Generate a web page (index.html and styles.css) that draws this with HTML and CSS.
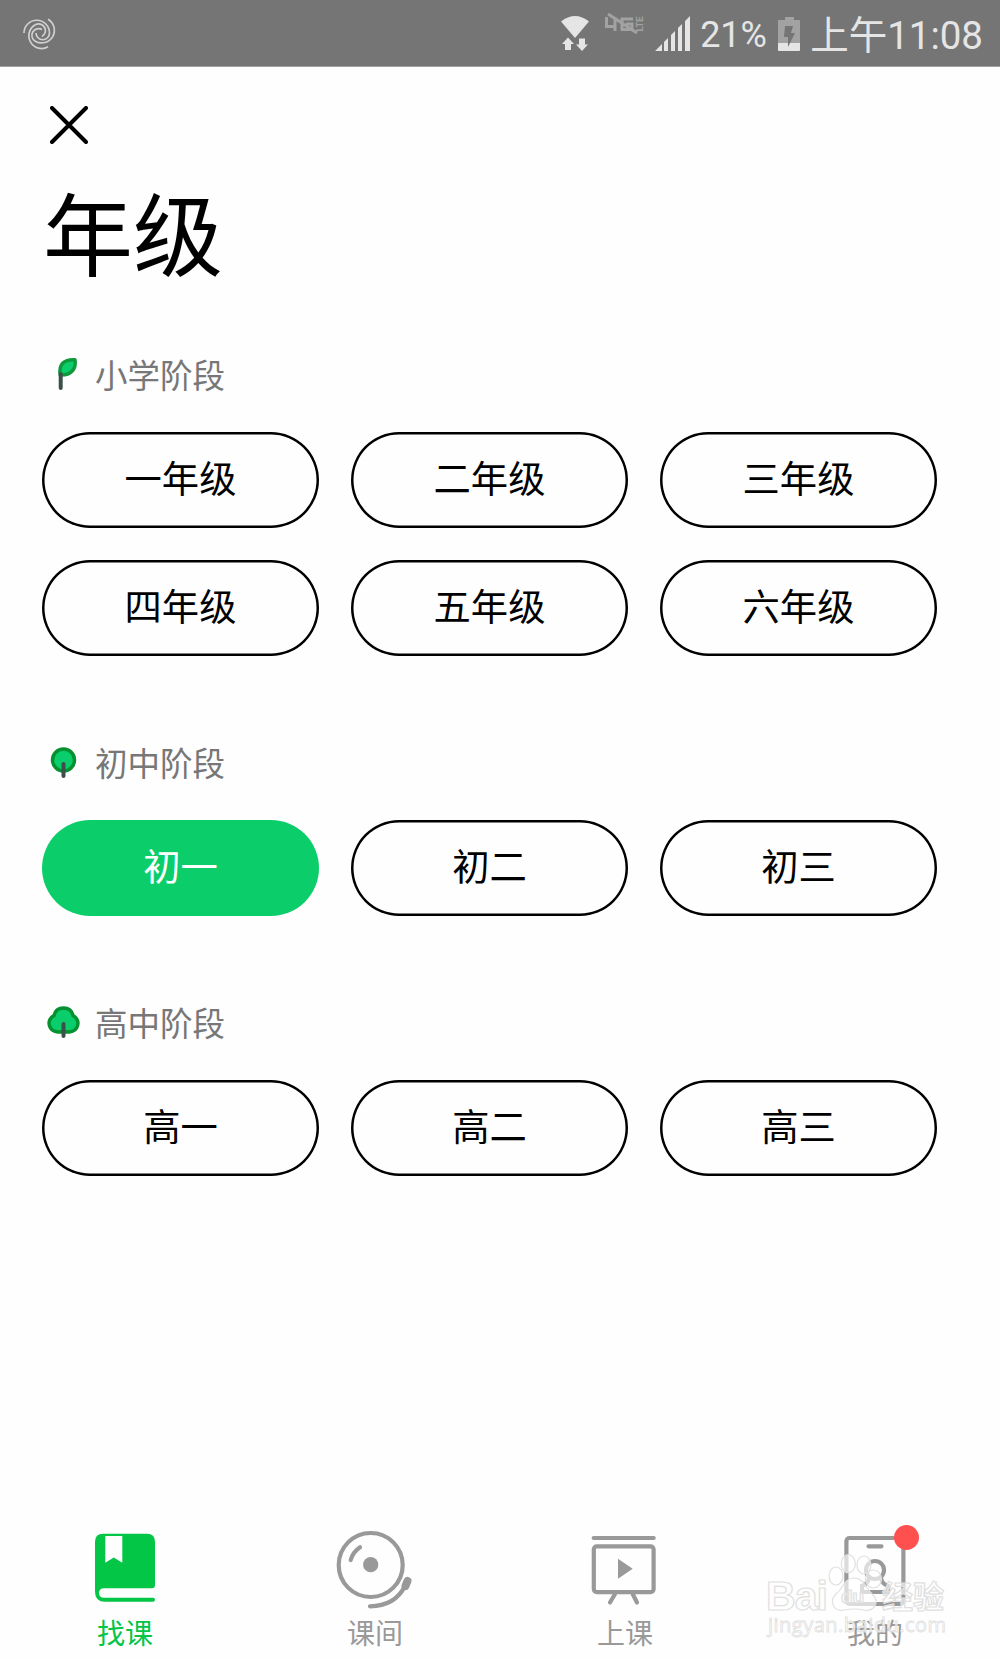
FILE: index.html
```
<!DOCTYPE html>
<html lang="zh-CN">
<head>
    <meta charset="UTF-8">
    <meta name="viewport" content="width=device-width, initial-scale=1.0">
    <title>年级</title>
    <link rel="stylesheet" href="styles.css">
</head>
<body>
    <header class="status-bar">
        <svg class="swirl" width="34" height="34" viewBox="0 0 34 34">
            <path d="M1 17A12.750 12.750 0 0 1 26.500 17A6.750 6.750 0 0 1 13 17"/>
            <path transform="rotate(120 17 17)" d="M1 17A12.750 12.750 0 0 1 26.500 17A6.750 6.750 0 0 1 13 17"/>
            <path transform="rotate(240 17 17)" d="M1 17A12.750 12.750 0 0 1 26.500 17A6.750 6.750 0 0 1 13 17"/>
        </svg>
        <div class="status-right">
            <svg class="wifi" width="30" height="38" viewBox="0 0 30 38">
                <path d="M1 6.500Q15-4.500 29 6.500L15 23Z"/>
                <path d="M8 22.500L14 29H11V35H5V29H2ZM22 36L28 29.500H25V23.500H19V29.500H16Z"/>
            </svg>
            <svg class="lte" width="40" height="22" viewBox="0 0 40 22">
                <path class="lte-line" d="M2.500 4V13.500H12M11 4V18M29 6H18V16.500H28V11H22M4 1L33 20"/>
                <text x="-18.500" y="38.500" textLength="15" transform="rotate(-90)">LTE</text>
            </svg>
            <svg class="signal" width="36" height="36" viewBox="0 0 36 36">
                <path d="M0 35L7 28V35ZM9 35V26L13 22V35ZM16 35V19L20 15V35ZM23 35V12L27 8V35ZM30 35V5L35 0V35Z"/>
            </svg>
            <span class="percent">21%</span>
            <svg class="battery" width="22" height="36" viewBox="0 0 22 36">
                <path fill="#a2a2a2" d="M7 1H16V4H22V34Q22 35 21 35H1Q0 35 0 34V4H7Z"/>
                <path fill="#e5e5e5" d="M0 27H22V34Q22 35 21 35H1Q0 35 0 34Z"/>
                <path fill="#757575" d="M7 10H15L13 17H17L10 31V21H6Z"/>
            </svg>
            <span class="clock">上午11:08</span>
        </div>
    </header>

    <main class="content">
        <svg class="close" width="38" height="38" viewBox="0 0 38 38">
            <path d="M2 2L36 36M36 2L2 36"/>
        </svg>
        <h1>年级</h1>

        <section class="stage">
            <h2>
                <svg class="stage-icon" width="34" height="34" viewBox="0 0 34 34">
                    <path d="M10.200 17C8.500 6 14 1.200 25 1.800C26.500 11 21 17.500 10.200 17Z" fill="#09ce6b" stroke="#0f983c" stroke-width="3.500" stroke-linejoin="round"/>
                    <path class="trunk" d="M10.700 16V30"/>
                </svg>
                小学阶段
            </h2>
            <div class="grades">
                <button>一年级</button>
                <button>二年级</button>
                <button>三年级</button>
                <button>四年级</button>
                <button>五年级</button>
                <button>六年级</button>
            </div>
        </section>

        <section class="stage">
            <h2>
                <svg class="stage-icon" width="34" height="34" viewBox="0 0 34 34">
                    <circle cx="13.500" cy="14" r="11" fill="#09ce6b" stroke="#05912f" stroke-width="3.500"/>
                    <path class="trunk" d="M13.500 18V30"/>
                </svg>
                初中阶段
            </h2>
            <div class="grades">
                <button class="selected">初一</button>
                <button>初二</button>
                <button>初三</button>
            </div>
        </section>

        <section class="stage">
            <h2>
                <svg class="stage-icon" width="34" height="34" viewBox="0 0 34 34">
                    <path d="M13.500 2C18.500 2 22 5 23 9.500C27.500 12 29.500 17 26.500 22C24 26.500 17 26.500 13.500 25.500C10 26.500 3 26.500 .5 22C-2.500 17-.5 12 4 9.500C5 5 8.500 2 13.500 2Z" fill="#09ce6b" stroke="#05912f" stroke-width="3.500"/>
                    <path class="trunk" d="M13.500 18V30"/>
                </svg>
                高中阶段
            </h2>
            <div class="grades">
                <button>高一</button>
                <button>高二</button>
                <button>高三</button>
            </div>
        </section>
    </main>

    <nav class="tabs">
        <a class="tab active">
            <svg width="84" height="84" viewBox="0 0 84 84">
                <path class="solid" fill-rule="evenodd" d="M20 7.700H64Q72 7.700 72 15.700V59Q72 62.300 69 62.300H21Q16 62.300 16 67Q16 71.700 21 71.700H70Q72 71.700 72 73.700Q72 75.700 70 75.700H22Q12 75.700 12 65.700V15.700Q12 7.700 20 7.700ZM22.300 10V36.700L30.800 31.500L39.300 36.700V10Z"/>
            </svg>
            <span>找课</span>
        </a>
        <a class="tab">
            <svg width="84" height="84" viewBox="0 0 84 84">
                <circle cx="37.700" cy="39" r="32"/>
                <circle class="solid" cx="37.700" cy="38.700" r="7.600"/>
                <path d="M17.700 34Q20 26 27 21.300M37 80.300Q62 80 72 60"/>
                <path class="hammer" d="M74.500 55L72.500 60"/>
            </svg>
            <span>课间</span>
        </a>
        <a class="tab">
            <svg width="84" height="84" viewBox="0 0 84 84">
                <path d="M10.700 12H70.700M32 68L27 76.500M49.700 68L54 76.500"/>
                <rect x="10.800" y="20.300" width="59.800" height="45.800" rx="3"/>
                <path class="solid" d="M35 32.700V52.700L49.700 42.700Z"/>
            </svg>
            <span>上课</span>
        </a>
        <a class="tab">
            <svg width="84" height="84" viewBox="0 0 84 84">
                <rect x="13.400" y="12" width="57" height="66" rx="3"/>
                <path d="M35.500 20.300H48.500M36 52Q35 58 29 60V66H55V60Q49 58 48 52"/>
                <circle cx="42" cy="44" r="9"/>
            </svg>
            <i class="badge"></i>
            <span>我的</span>
        </a>
    </nav>

    <svg class="watermark" width="200" height="100" viewBox="0 0 200 100">
        <text class="mark" x="2" y="60" font-size="41" textLength="62">Bai</text>
        <g class="paw">
            <ellipse cx="72" cy="26" rx="7" ry="9"/>
            <ellipse cx="84.300" cy="13.700" rx="7" ry="9"/>
            <ellipse cx="100" cy="15" rx="7" ry="9"/>
            <ellipse cx="109.500" cy="29" rx="8" ry="9"/>
            <path d="M90 28C100 28 102 38 109 45C116 52 110 62 100 60Q90 58 80 60C69 62 65 51 72 44C80 38 80 28 90 28Z"/>
        </g>
        <text class="mark" x="77" y="53" font-size="19">du</text>
        <text class="mark cn" x="118" y="58" font-size="31">经验</text>
        <text class="mark url" x="4" y="82" font-size="20" textLength="178">jingyan.baidu.com</text>
    </svg>
</body>
</html>
```

FILE: styles.css
```
* {
    box-sizing: border-box;
}
body {
    margin: 0;
    height: 1661px;
    display: flex;
    flex-direction: column;
    position: relative;
    background: #fefefe;
    color: #000;
    font-family: Roboto, "Noto Sans CJK SC", sans-serif;
}
.status-bar {
    height: 67px;
    display: flex;
    justify-content: space-between;
    padding: 0 17px 0 23px;
    background: #757575;
    border-bottom: 1px solid #a0a0a0;
    color: #e5e5e5;
}
.swirl {
    margin-top: 16px;
    fill: none;
    stroke: #d0d0d0;
    stroke-width: 1.7;
}
.status-right {
    display: flex;
    align-items: flex-start;
}
.wifi {
    margin: 15px 14px 0 0;
    fill: #e5e5e5;
}
.lte {
    margin: 13px 11px 0 0;
    fill: #a2a2a2;
    font: bold 9.5px Roboto, sans-serif;
}
.lte-line {
    fill: none;
    stroke: #a2a2a2;
    stroke-width: 3;
}
.signal {
    margin: 16px 9px 0 0;
    fill: #e5e5e5;
}
.percent {
    width: 78px;
    font-size: 36px;
    line-height: 71px;
}
.battery {
    margin: 16px 10px 0 0;
}
.clock {
    font-size: 38.5px;
    line-height: 72px;
    white-space: nowrap;
}
.content {
    flex: 1;
    padding: 39px 42px 0;
}
.close {
    display: block;
    margin-left: 8px;
    fill: none;
    stroke: #000;
    stroke-width: 4;
    stroke-linecap: round;
}
h1 {
    margin: 45px 0 67px 1px;
    font-size: 90px;
    line-height: 100px;
    font-weight: 400;
}
.stage {
    margin-bottom: 88px;
}
.stage h2 {
    display: flex;
    align-items: center;
    gap: 11px;
    margin: 0 0 36px 8px;
    padding-top: 2px;
    height: 40px;
    font-size: 32.5px;
    line-height: 38px;
    font-weight: 400;
    color: #777;
}
.stage-icon {
    margin-bottom: 4px;
    overflow: visible;
}
.trunk {
    fill: none;
    stroke: #3c4f4a;
    stroke-width: 4;
    stroke-linecap: round;
}
.grades {
    display: grid;
    grid-template-columns: repeat(3, 277px);
    gap: 32px;
}
.grades button {
    height: 96px;
    padding: 0 0 6px;
    border: 0;
    border-radius: 48px;
    box-shadow: inset 0 0 0 2.5px #000;
    background: none;
    color: #000;
    font: 37.3px Roboto, "Noto Sans CJK SC", sans-serif;
}
.grades .selected {
    background: #0bce6b;
    box-shadow: none;
    color: #fff;
}
.tabs {
    height: 135px;
    display: flex;
}
.tab {
    flex: 1;
    display: flex;
    flex-direction: column;
    align-items: center;
    gap: 5px;
    position: relative;
    color: #999;
    font-size: 28px;
    line-height: 40px;
}
.tab svg {
    fill: none;
    stroke: currentColor;
    stroke-width: 4.2;
    stroke-linecap: round;
}
.tab .solid {
    fill: currentColor;
    stroke: none;
}
.tab .hammer {
    stroke-width: 8;
}
.tab.active {
    color: #03c546;
}
.badge {
    position: absolute;
    top: -1px;
    left: 144px;
    width: 25px;
    height: 25px;
    border-radius: 50%;
    background: #ff5050;
}
.watermark {
    position: absolute;
    left: 764px;
    top: 1550px;
    font-family: "Liberation Sans", "Noto Sans CJK SC", sans-serif;
    font-weight: bold;
}
.mark, .paw {
    fill: #fff;
    fill-opacity: .65;
    stroke: #e0e0e0;
    stroke-width: 1.2;
}
.mark.url {
    font-family: "Open Sans", sans-serif;
    font-weight: normal;
    stroke-width: .8;
}
```
